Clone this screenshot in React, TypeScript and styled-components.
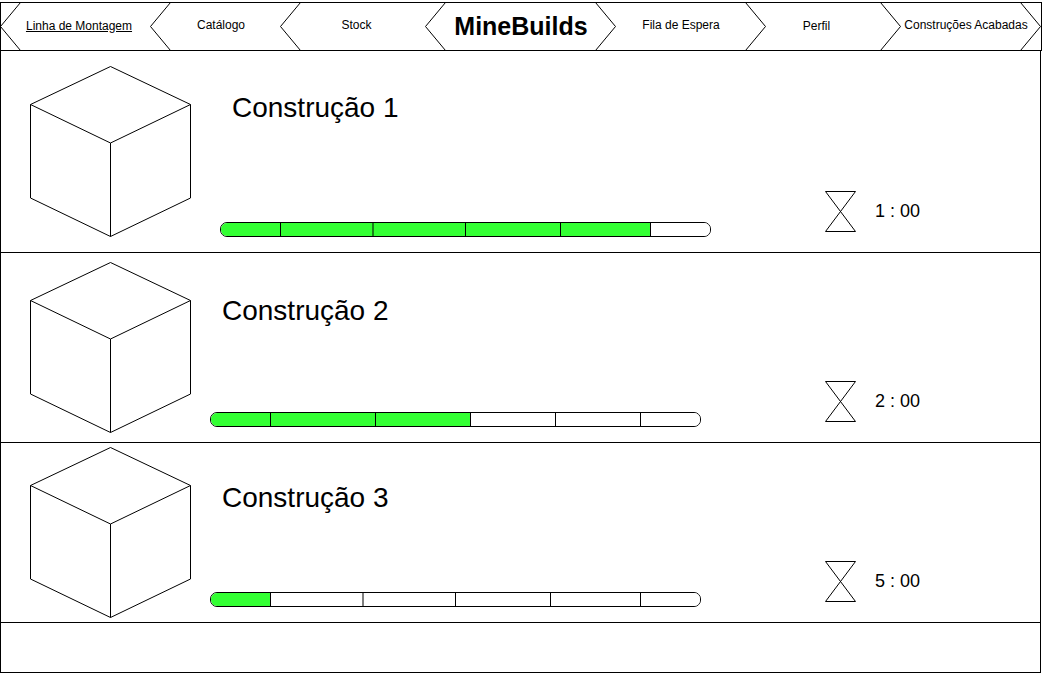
import React from "react";
import styled, { createGlobalStyle } from "styled-components";

const GlobalStyle = createGlobalStyle`
  *, *::before, *::after { box-sizing: border-box; }
  body {
    margin: 0;
    background: #fff;
    color: #000;
    font-family: "Liberation Sans", Arial, Helvetica, sans-serif;
  }
`;

const Page = styled.div`
  display: flex;
  flex-direction: column;
  min-height: 100vh;
  padding-top: 2px;
`;

const NavBar = styled.nav`
  display: flex;
  height: 49px;
  border: 1px solid #000;
`;

const ChevronSvg = styled.svg`
  flex: none;
  display: block;
  width: 20px;
  height: 47px;
  overflow: visible;
`;

const NavCell = styled.div<{ $grow: number }>`
  flex: ${(p) => p.$grow} 1 0;
  min-width: 0;
  display: flex;
  align-items: center;
  justify-content: center;
  padding-bottom: 2px;
`;

const NavLink = styled.a<{ $before?: number; $after?: number; $raised?: boolean; $current?: boolean }>`
  padding: 0 ${(p) => p.$after ?? 0}px ${(p) => (p.$raised ? 2 : 0)}px ${(p) => p.$before ?? 0}px;
  color: inherit;
  font-size: 12px;
  line-height: 14px;
  white-space: nowrap;
  text-decoration: ${(p) => (p.$current ? "underline" : "none")};
`;

const Brand = styled.h1`
  margin: 0;
  font-size: 25px;
  line-height: 30px;
  font-weight: 700;
`;

const Main = styled.main`
  flex: 1;
  display: flex;
  flex-direction: column;
  margin-right: 1px;
  border: 1px solid #000;
  border-top: 0;
`;

const BuildRow = styled.section`
  display: flex;
  border-bottom: 1px solid #000;
`;

const CubeCell = styled.div<{ $space: number }>`
  flex: none;
  padding: ${(p) => p.$space}px 0 ${(p) => p.$space}px 29px;
`;

const CubeSvg = styled.svg`
  display: block;
  width: 161px;
  height: 171px;
`;

const BuildInfo = styled.div<{ $top: number; $indent: number; $end: number }>`
  flex: 1;
  min-width: 0;
  display: flex;
  flex-direction: column;
  justify-content: space-between;
  padding: ${(p) => p.$top}px ${(p) => p.$end}px 15px ${(p) => p.$indent}px;
`;

const BuildTitle = styled.h2`
  margin: 0;
  padding-left: 12px;
  font-size: 28px;
  line-height: 32px;
  font-weight: 400;
`;

const ProgressBar = styled.div`
  display: flex;
  height: 15px;
  border: 1px solid #000;
  border-radius: 7px;
  overflow: hidden;
`;

const Step = styled.div<{ $size: number; $done: boolean; $soft: boolean }>`
  flex: ${(p) => p.$size} 1 0;
  background: ${(p) => (p.$done ? "#33ff33" : "#fff")};
  border-left: ${(p) => (p.$soft ? "2px solid rgba(0, 0, 0, 0.5)" : "1px solid #000")};

  &:first-child { border-left: 0; }
`;

const Timer = styled.div`
  flex: none;
  display: flex;
  align-items: center;
  align-self: flex-end;
  gap: 19px;
  width: 215px;
  padding-bottom: 20px;
`;

const TimeLeft = styled.span`
  padding-bottom: 2px;
  font-size: 18px;
  line-height: 20px;
`;

const HourglassSvg = styled.svg`
  display: block;
  width: 31px;
  height: 41px;
`;

const Chevron = ({ right = false }: { right?: boolean }) => (
  <ChevronSvg viewBox="0 0 20 47" fill="none" stroke="#000" aria-hidden="true">
    <path d={right ? "M-.5-.5 19.5 23.5-.5 47.5" : "M19.5-.5-.5 23.5 19.5 47.5"} />
  </ChevronSvg>
);

const Cube = () => (
  <CubeSvg viewBox="0 0 161 171" fill="none" stroke="#000" aria-hidden="true">
    <path d="M80.5.5 160.5 38.5V132L80.5 170.5.5 132V38.5Z" />
    <path d="M.5 38.5 80.5 77 160.5 38.5M80.5 77V170.5" />
  </CubeSvg>
);

const Hourglass = () => (
  <HourglassSvg viewBox="0 0 31 41" fill="none" stroke="#000" aria-hidden="true">
    <path d="M.5.5H30.5L.5 40.5H30.5Z" />
  </HourglassSvg>
);

interface NavItem {
  label: string;
  grow: number;
  before?: number;
  after?: number;
  raised?: boolean;
  current?: boolean;
}

const leftItems: NavItem[] = [
  { label: "Linha de Montagem", grow: 130, after: 14, current: true },
  { label: "Catálogo", grow: 110, after: 10, raised: true },
  { label: "Stock", grow: 125, after: 14, raised: true },
];

const rightItems: NavItem[] = [
  { label: "Fila de Espera", grow: 130, raised: true },
  { label: "Perfil", grow: 115, after: 14 },
  { label: "Construções Acabadas", grow: 120, before: 10, raised: true },
];

interface Build {
  name: string;
  time: string;
  steps: number[];
  done: number;
  softStep?: number;
  space: number;
  top: number;
  indent: number;
  end: number;
}

const builds: Build[] = [
  { name: "Construção 1", time: "1 : 00", steps: [59, 91, 91, 94, 89, 59], done: 5, softStep: 2, space: 15, top: 41, indent: 29, end: 114 },
  { name: "Construção 2", time: "2 : 00", steps: [59, 104, 94, 84, 84, 59], done: 3, space: 9, top: 42, indent: 19, end: 124 },
  { name: "Construção 3", time: "5 : 00", steps: [59, 91, 91, 94, 89, 59], done: 1, softStep: 2, space: 4, top: 39, indent: 19, end: 124 },
];

const NavEntry = ({ item }: { item: NavItem }) => (
  <NavCell $grow={item.grow}>
    <NavLink
      href="#"
      $before={item.before}
      $after={item.after}
      $raised={item.raised}
      $current={item.current}
      aria-current={item.current ? "page" : undefined}
    >
      {item.label}
    </NavLink>
  </NavCell>
);

export default function App() {
  return (
    <>
      <GlobalStyle />
      <Page>
        <NavBar>
          {leftItems.map((item) => (
            <React.Fragment key={item.label}>
              <Chevron />
              <NavEntry item={item} />
            </React.Fragment>
          ))}
          <Chevron />
          <NavCell $grow={150}>
            <Brand>MineBuilds</Brand>
          </NavCell>
          <Chevron right />
          {rightItems.map((item) => (
            <React.Fragment key={item.label}>
              <NavEntry item={item} />
              <Chevron right />
            </React.Fragment>
          ))}
        </NavBar>
        <Main>
          {builds.map((build) => (
            <BuildRow key={build.name}>
              <CubeCell $space={build.space}>
                <Cube />
              </CubeCell>
              <BuildInfo $top={build.top} $indent={build.indent} $end={build.end}>
                <BuildTitle>{build.name}</BuildTitle>
                <ProgressBar
                  role="progressbar"
                  aria-label={build.name}
                  aria-valuemin={0}
                  aria-valuemax={build.steps.length}
                  aria-valuenow={build.done}
                >
                  {build.steps.map((size, i) => (
                    <Step key={i} $size={size} $done={i < build.done} $soft={i === build.softStep} />
                  ))}
                </ProgressBar>
              </BuildInfo>
              <Timer>
                <Hourglass />
                <TimeLeft>{build.time}</TimeLeft>
              </Timer>
            </BuildRow>
          ))}
        </Main>
      </Page>
    </>
  );
}
